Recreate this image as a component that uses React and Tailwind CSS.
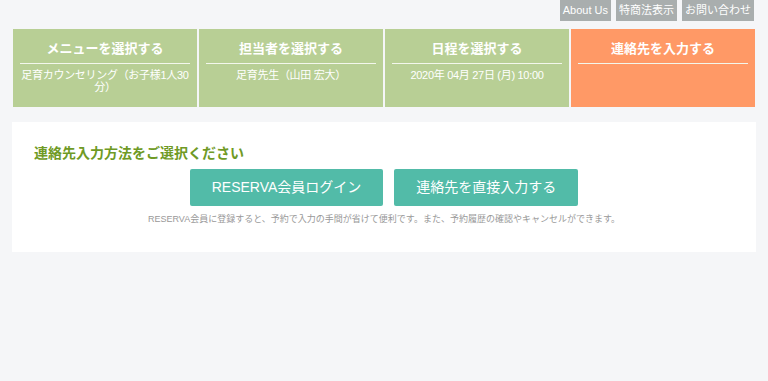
import React from "react";

const font = { fontFamily: '"Liberation Sans", "Noto Sans CJK JP", sans-serif' };

const steps = [
  { title: "メニューを選択する", value: ["足育カウンセリング（お子様1人30", "分）"], active: false },
  { title: "担当者を選択する", value: ["足育先生（山田 宏大）"], active: false },
  { title: "日程を選択する", value: ["2020年 04月 27日 (月) 10:00"], active: false },
  { title: "連絡先を入力する", value: [], active: true },
];

function StepBox({ step }) {
  return (
    <div
      className={`flex-1 h-[78px] px-[7px] pt-[11px] text-white ${
        step.active ? "bg-[#ff9966]" : "bg-[#b8cf95]"
      }`}
    >
      <div className="border-b border-[#f3f7ec] pb-[5px] text-center text-[13px] font-bold leading-[18px]">
        {step.title}
      </div>
      <div className="mt-[5px] text-center text-[11px] leading-[12px]">
        {step.value.map((line, i) => (
          <div key={i} className="whitespace-nowrap tracking-[-0.3px]">
            {line}
          </div>
        ))}
      </div>
    </div>
  );
}

export default function App() {
  return (
    <div className="min-h-[381px] bg-[#f5f6f8]" style={font}>
      {/* top links */}
      <div className="flex justify-end gap-[5px] pr-[14px]">
        <a className="flex h-[21px] items-center bg-[#a9aeae] px-[3px] text-[11px] text-white">About Us</a>
        <a className="flex h-[21px] items-center bg-[#a9aeae] px-[3px] text-[11px] text-white">特商法表示</a>
        <a className="flex h-[21px] items-center bg-[#a9aeae] px-[3px] text-[11px] text-white">お問い合わせ</a>
      </div>

      {/* steps */}
      <div className="ml-[13px] mr-[13px] mt-[8px] flex gap-[2px]">
        {steps.map((s) => (
          <StepBox key={s.title} step={s} />
        ))}
      </div>

      {/* contact method */}
      <div className="mx-[12px] mt-[15px] h-[130px] bg-white px-[22px] pt-[22px]">
        <h2 className="text-[14px] font-bold leading-[18px] text-[#6f9a25]">連絡先入力方法をご選択ください</h2>
        <div className="mt-[7px] flex justify-center gap-[11px]">
          <button className="h-[37px] rounded-[2px] bg-[#52bba8] px-[22px] text-[14px] text-white">
            RESERVA会員ログイン
          </button>
          <button className="h-[37px] rounded-[2px] bg-[#52bba8] px-[22px] text-[14px] text-white">
            連絡先を直接入力する
          </button>
        </div>
        <p className="mt-[7px] text-center text-[9px] leading-[12px] text-[#999999]">
          RESERVA会員に登録すると、予約で入力の手間が省けて便利です。また、予約履歴の確認やキャンセルができます。
        </p>
      </div>
    </div>
  );
}
